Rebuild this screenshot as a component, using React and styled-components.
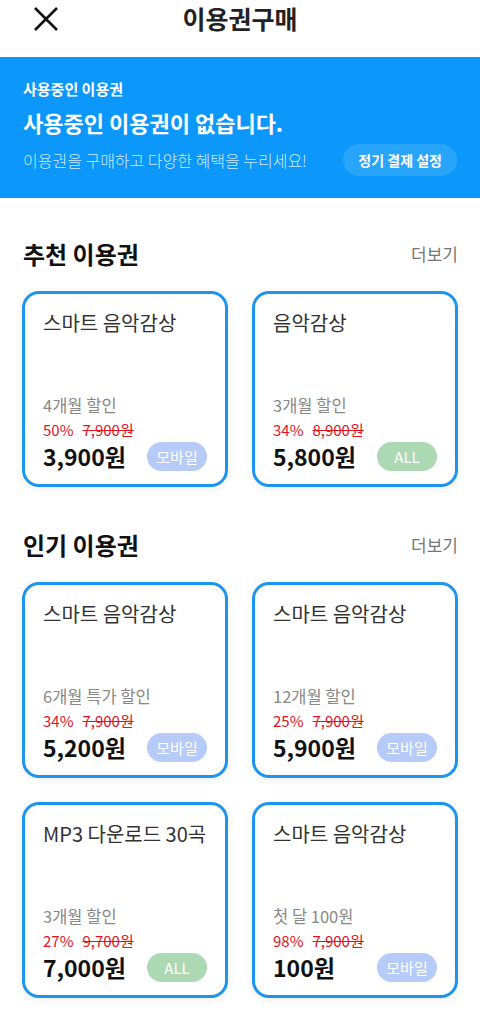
import React from "react";
import styled, { createGlobalStyle } from "styled-components";

const GlobalStyle = createGlobalStyle`
  html, body {
    margin: 0;
    padding: 0;
    background: #fff;
    font-family: "Noto Sans CJK KR", "Noto Sans", sans-serif;
  }
  * { box-sizing: border-box; }
`;

const recommended = [
  { title: "스마트 음악감상", sub: "4개월 할인", rate: "50%", orig: "7,900원", price: "3,900원", badge: "모바일" },
  { title: "음악감상", sub: "3개월 할인", rate: "34%", orig: "8,900원", price: "5,800원", badge: "ALL" },
];

const popular = [
  { title: "스마트 음악감상", sub: "6개월 특가 할인", rate: "34%", orig: "7,900원", price: "5,200원", badge: "모바일" },
  { title: "스마트 음악감상", sub: "12개월 할인", rate: "25%", orig: "7,900원", price: "5,900원", badge: "모바일" },
  { title: "MP3 다운로드 30곡", sub: "3개월 할인", rate: "27%", orig: "9,700원", price: "7,000원", badge: "ALL" },
  { title: "스마트 음악감상", sub: "첫 달 100원", rate: "98%", orig: "7,900원", price: "100원", badge: "모바일" },
];

function PassCard({ item }) {
  return (
    <Card>
      <CardTitle>{item.title}</CardTitle>
      <CardSub>{item.sub}</CardSub>
      <Discount>
        <span>{item.rate}</span>
        <s>{item.orig}</s>
      </Discount>
      <PriceRow>
        <Price>{item.price}</Price>
        <Badge $all={item.badge === "ALL"}>{item.badge}</Badge>
      </PriceRow>
    </Card>
  );
}

function Section({ title, items }) {
  return (
    <SectionWrap>
      <SectionHead>
        <h2>{title}</h2>
        <More>더보기</More>
      </SectionHead>
      <Grid>
        {items.map((item, i) => (
          <PassCard key={i} item={item} />
        ))}
      </Grid>
    </SectionWrap>
  );
}

export default function App() {
  return (
    <Page>
      <GlobalStyle />
      <Header>
        <CloseBtn>
          <svg width="26" height="26" viewBox="0 0 26 26" fill="none">
            <path d="M2 2L24 24M24 2L2 24" stroke="#111" strokeWidth="2.6" />
          </svg>
        </CloseBtn>
        <HeaderTitle>이용권구매</HeaderTitle>
      </Header>
      <Banner>
        <BannerLabel>사용중인 이용권</BannerLabel>
        <BannerTitle>사용중인 이용권이 없습니다.</BannerTitle>
        <BannerRow>
          <BannerText>이용권을 구매하고 다양한 혜택을 누리세요!</BannerText>
          <BannerButton>정기 결제 설정</BannerButton>
        </BannerRow>
      </Banner>
      <Section title="추천 이용권" items={recommended} />
      <Section title="인기 이용권" items={popular} />
    </Page>
  );
}

const Page = styled.div`
  width: 480px;
  min-height: 1020px;
  background: #fff;
`;

const Header = styled.div`
  position: relative;
  height: 57px;
  display: flex;
  justify-content: center;
`;

const CloseBtn = styled.button`
  position: absolute;
  left: 33px;
  top: 6px;
  width: 26px;
  height: 26px;
  padding: 0;
  border: none;
  background: none;
  display: flex;
`;

const HeaderTitle = styled.h1`
  margin: 0;
  font-size: 25px;
  font-weight: 700;
  color: #222;
  line-height: 36px;
`;

const Banner = styled.div`
  height: 141px;
  background: #0b98fa;
  padding: 22px 23px 0;
  color: #fff;
`;

const BannerLabel = styled.div`
  font-size: 15px;
  font-weight: 700;
  line-height: 20px;
`;

const BannerTitle = styled.div`
  font-size: 22px;
  font-weight: 700;
  line-height: 30px;
  margin-top: 8px;
`;

const BannerRow = styled.div`
  display: flex;
  justify-content: space-between;
  align-items: center;
  margin-top: 7px;
`;

const BannerText = styled.div`
  font-size: 16px;
  font-weight: 300;
  color: rgba(255, 255, 255, 0.8);
`;

const BannerButton = styled.button`
  height: 32px;
  padding: 0 15px;
  border: none;
  border-radius: 16px;
  background: rgba(255, 255, 255, 0.12);
  color: #fff;
  font-family: inherit;
  font-size: 14px;
  font-weight: 700;
`;

const SectionWrap = styled.section`
  padding: 38px 22px 0;
  & + & {
    padding-top: 40px;
  }
`;

const SectionHead = styled.div`
  display: flex;
  justify-content: space-between;
  align-items: center;
  height: 34px;
  margin-bottom: 21px;
  padding-left: 1px;

  h2 {
    margin: 0;
    font-size: 24px;
    font-weight: 700;
    color: #111;
  }
`;

const More = styled.span`
  font-size: 17px;
  color: #777;
`;

const Grid = styled.div`
  display: grid;
  grid-template-columns: 1fr 1fr;
  gap: 24px 24px;
`;

const Card = styled.div`
  height: 196px;
  border: 3px solid #1c95f0;
  border-radius: 17px;
  background: #fff;
  box-shadow: 0 2px 10px rgba(0, 0, 0, 0.07);
  padding: 15px 18px 13px;
  display: flex;
  flex-direction: column;
`;

const CardTitle = styled.div`
  font-size: 20px;
  color: #333;
  line-height: 28px;
  flex: 1;
`;

const CardSub = styled.div`
  font-size: 16.5px;
  color: #888;
  line-height: 22px;
  margin-bottom: 4px;
`;

const Discount = styled.div`
  display: flex;
  gap: 9px;
  font-size: 15px;
  color: #e0141e;
  line-height: 20px;

  s {
    text-decoration-thickness: 1px;
  }
`;

const PriceRow = styled.div`
  display: flex;
  justify-content: space-between;
  align-items: center;
  margin-top: 1px;
`;

const Price = styled.div`
  font-size: 23px;
  font-weight: 700;
  color: #111;
  line-height: 30px;
`;

const Badge = styled.span`
  width: 60px;
  height: 29px;
  border-radius: 15px;
  display: flex;
  align-items: center;
  justify-content: center;
  font-size: 15px;
  color: #fff;
  background: ${(p) => (p.$all ? "#acd9b3" : "#b6cbf7")};
`;
